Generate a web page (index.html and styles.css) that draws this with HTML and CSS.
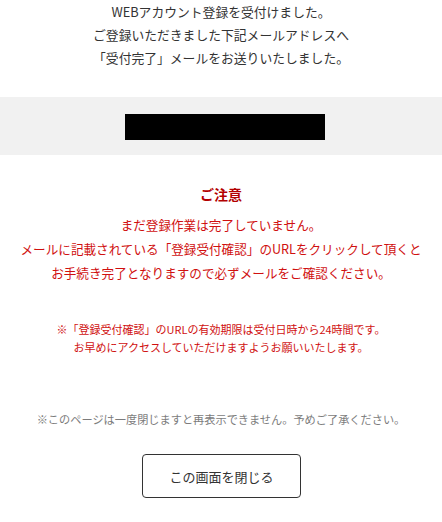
FILE: index.html
```html
<!DOCTYPE html>
<html lang="ja">
<head>
<meta charset="utf-8">
<title>受付完了</title>
<link rel="stylesheet" href="styles.css">
</head>
<body>
<div class="page">
  <p class="lead">WEBアカウント登録を受付けました。<br>ご登録いただきました下記メールアドレスへ<br>「受付完了」メールをお送りいたしました。</p>
  <div class="band"><span class="mask"></span></div>
  <h2 class="notice-title">ご注意</h2>
  <p class="notice">まだ登録作業は完了していません。<br>メールに記載されている「登録受付確認」のURLをクリックして頂くと<br>お手続き完了となりますので必ずメールをご確認ください。</p>
  <p class="notice-small">※「登録受付確認」のURLの有効期限は受付日時から24時間です。<br>お早めにアクセスしていただけますようお願いいたします。</p>
  <p class="caution">※このページは一度閉じますと再表示できません。予めご了承ください。</p>
  <div class="actions"><button class="close-btn" type="button">この画面を閉じる</button></div>
</div>
</body>
</html>
```
FILE: styles.css
```css
html, body {
  margin: 0;
  padding: 0;
  background: #ffffff;
}
body {
  font-family: "Noto Sans CJK JP", "Noto Sans", sans-serif;
  color: #333333;
}
.page {
  display: flex;
  flex-direction: column;
  align-items: stretch;
  text-align: center;
}
.lead {
  margin: 0;
  font-size: 12.8px;
  line-height: 23px;
  color: #333333;
}
.band {
  margin-top: 28px;
  height: 58px;
  background: #f1f1f1;
  display: flex;
  justify-content: center;
  align-items: flex-start;
  padding-left: 8px;
  box-sizing: border-box;
}
.mask {
  display: block;
  margin-top: 17px;
  width: 200px;
  height: 26px;
  background: #000000;
}
.notice-title {
  margin: 27px 0 0;
  font-size: 14px;
  line-height: 25px;
  font-weight: bold;
  color: #b30000;
}
.notice {
  margin: 6px 0 0;
  font-size: 12.6px;
  line-height: 24px;
  color: #d01010;
}
.notice-small {
  margin: 35px 0 0;
  font-size: 11px;
  line-height: 18px;
  color: #d01010;
}
.caution {
  margin: 54px 0 0;
  font-size: 11.2px;
  line-height: 18px;
  color: #7c7c7c;
}
.actions {
  margin-top: 26px;
  display: flex;
  justify-content: center;
}
.close-btn {
  margin-left: 1px;
  width: 159px;
  height: 44px;
  background: #ffffff;
  border: 1px solid #333333;
  border-radius: 4px;
  font-family: "Noto Sans CJK JP", "Noto Sans", sans-serif;
  font-size: 13px;
  color: #333333;
  padding: 0;
}
```
